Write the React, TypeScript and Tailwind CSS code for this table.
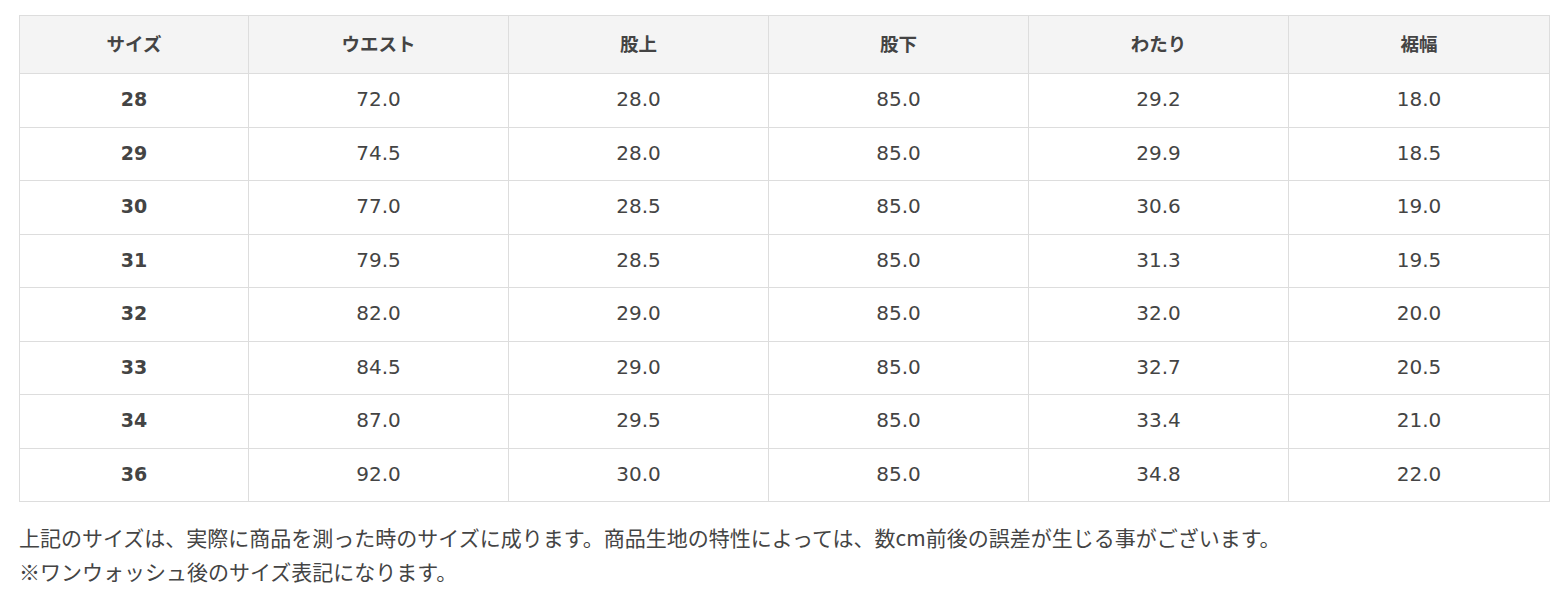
const HEADERS = ["サイズ", "ウエスト", "股上", "股下", "わたり", "裾幅"];

const ROWS: string[][] = [
  ["28", "72.0", "28.0", "85.0", "29.2", "18.0"],
  ["29", "74.5", "28.0", "85.0", "29.9", "18.5"],
  ["30", "77.0", "28.5", "85.0", "30.6", "19.0"],
  ["31", "79.5", "28.5", "85.0", "31.3", "19.5"],
  ["32", "82.0", "29.0", "85.0", "32.0", "20.0"],
  ["33", "84.5", "29.0", "85.0", "32.7", "20.5"],
  ["34", "87.0", "29.5", "85.0", "33.4", "21.0"],
  ["36", "92.0", "30.0", "85.0", "34.8", "22.0"],
];

export default function App() {
  return (
    <div
      className="min-h-screen bg-white px-[19px] pt-[15px] text-[#444]"
      style={{ fontFamily: '"DejaVu Sans", "Noto Sans CJK JP", sans-serif' }}
    >
      <table className="w-[1530px] table-fixed border-collapse text-center">
        <colgroup>
          <col className="w-[229px]" />
          <col className="w-[260px]" />
          <col className="w-[260px]" />
          <col className="w-[260px]" />
          <col className="w-[260px]" />
          <col className="w-[261px]" />
        </colgroup>
        <thead>
          <tr className="h-[58px] bg-[#f4f4f4]">
            {HEADERS.map((h) => (
              <th
                key={h}
                className="border border-[#dddddd] pb-[2px] text-[18.5px] font-bold text-[#444]"
                style={{ fontFamily: '"Noto Sans CJK JP", sans-serif' }}
              >
                {h}
              </th>
            ))}
          </tr>
        </thead>
        <tbody>
          {ROWS.map((row) => (
            <tr key={row[0]} className="h-[53.5px]">
              {row.map((v, i) => (
                <td
                  key={i}
                  className={
                    i === 0
                      ? "border border-[#dddddd] pb-[2px] text-[19px] font-bold text-[#444]"
                      : "border border-[#dddddd] pb-[2px] text-[20px] text-[#444]"
                  }
                >
                  {v}
                </td>
              ))}
            </tr>
          ))}
        </tbody>
      </table>

      {/* note */}
      <div
        className="mt-[18px] text-[21px] leading-[34px] text-[#444]"
        style={{ fontFamily: '"Noto Sans CJK JP", sans-serif' }}
      >
        <p>上記のサイズは、実際に商品を測った時のサイズに成ります。商品生地の特性によっては、数cm前後の誤差が生じる事がございます。</p>
        <p>※ワンウォッシュ後のサイズ表記になります。</p>
      </div>
    </div>
  );
}
